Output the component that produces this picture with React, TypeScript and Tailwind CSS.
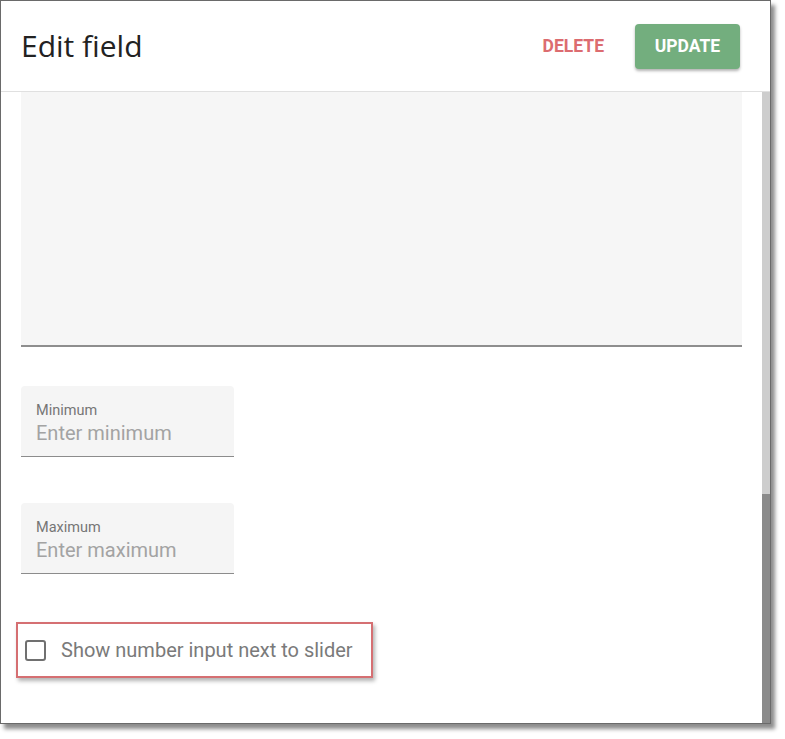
import React from 'react';

const font = { fontFamily: 'Roboto, "Liberation Sans", sans-serif' };

const TextField = ({ label, placeholder }: { label: string; placeholder: string }) => (
  <div className="w-[213px] h-[71px] bg-[#f5f5f5] rounded-t-[4px] border-b border-[#8c8c8c] pl-[15px] pt-[16px]">
    <div className="text-[14.5px] leading-[18px] text-[#757575]">{label}</div>
    <div className="text-[20px] leading-[24px] text-[#a3a3a3] mt-[1px]">{placeholder}</div>
  </div>
);

export default function App() {
  return (
    <div className="w-[785px] h-[739px] bg-white" style={font}>
      <div className="w-[771px] h-[724px] border border-[#6a6a6a] bg-white flex flex-col shadow-[4px_5px_4px_rgba(0,0,0,0.45)]">
        {/* header */}
        <div className="h-[91px] shrink-0 flex items-center border-b border-[#e0e0e0] pl-[20px] pr-[30px]">
          <h1
            className="text-[30px] leading-[34px] text-[#222222] flex-1 -mt-[1px]"
            style={{ fontFamily: '"Open Sans", "Noto Sans", sans-serif' }}
          >
            Edit field
          </h1>
          <button className="text-[17.5px] font-bold text-[#dc6c70] mr-[31px]">DELETE</button>
          <button className="w-[105px] h-[45px] rounded-[4px] bg-[#73ae7e] text-white text-[17.5px] font-bold shadow-[0_2px_3px_rgba(0,0,0,0.3)]">
            UPDATE
          </button>
        </div>

        {/* body */}
        <div className="flex-1 flex min-h-0">
          <div className="flex-1 px-[20px] flex flex-col">
            <div className="h-[255px] bg-[#f6f6f6] border-b-2 border-[#8e8e8e]" />
            <div className="mt-[39px]">
              <TextField label="Minimum" placeholder="Enter minimum" />
            </div>
            <div className="mt-[46px]">
              <TextField label="Maximum" placeholder="Enter maximum" />
            </div>
            <div className="mt-[48px] -ml-[5px] w-[357px] h-[56px] border-2 border-[#d56f72] flex items-center pl-[7px] shadow-[2px_3px_4px_rgba(0,0,0,0.3)]">
              <div className="w-[21px] h-[21px] border-2 border-[#707070] rounded-[3px]" />
              <span className="ml-[15px] text-[20px] text-[#7a7a7a]">Show number input next to slider</span>
            </div>
          </div>
          {/* scrollbar */}
          <div className="w-[8px] flex flex-col">
            <div className="h-[402px] bg-[#cdcdcd]" />
            <div className="flex-1 bg-[#8a8a8a]" />
          </div>
        </div>
      </div>
    </div>
  );
}
